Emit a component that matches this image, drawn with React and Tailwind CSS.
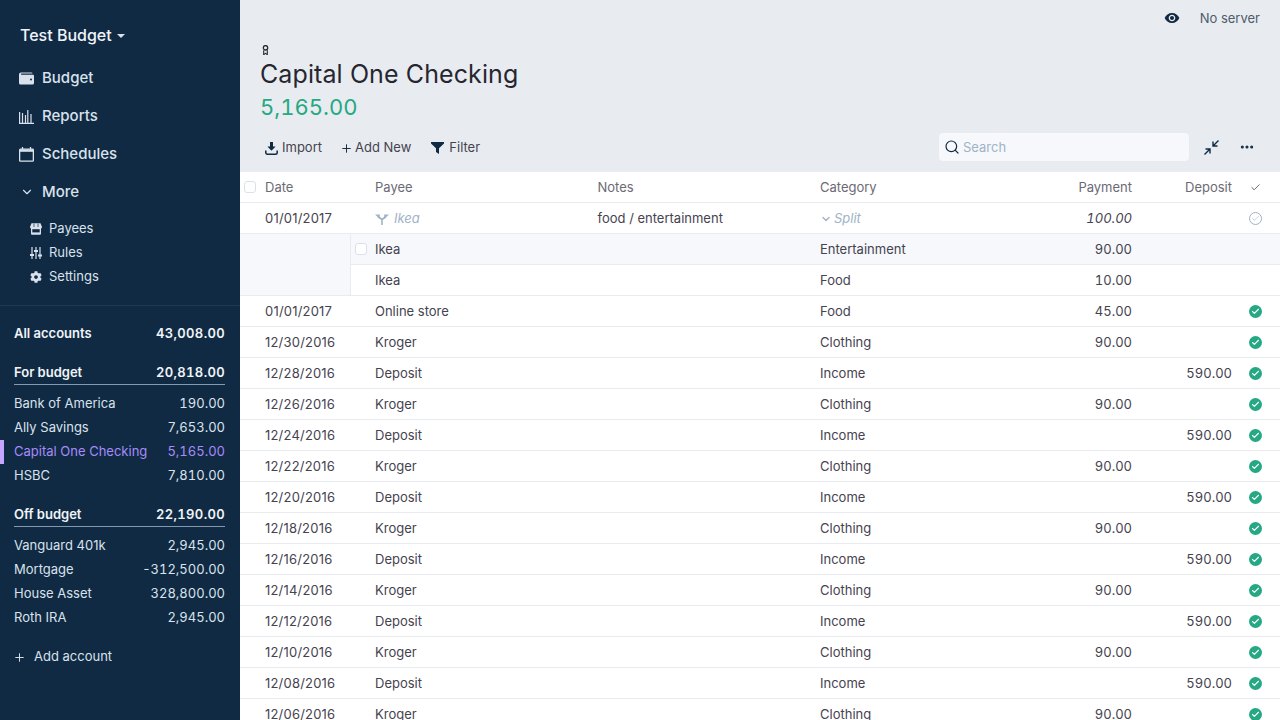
import { Plus, Search, Ellipsis, ChevronDown, Check } from "lucide-react";
import { MdVisibility } from "react-icons/md";
import { FaCog } from "react-icons/fa";

const accountGroups = [
  {
    name: "For budget",
    total: "20,818.00",
    accounts: [
      ["Bank of America", "190.00"],
      ["Ally Savings", "7,653.00"],
      ["Capital One Checking", "5,165.00", true],
      ["HSBC", "7,810.00"],
    ],
  },
  {
    name: "Off budget",
    total: "22,190.00",
    accounts: [
      ["Vanguard 401k", "2,945.00"],
      ["Mortgage", "-312,500.00"],
      ["House Asset", "328,800.00"],
      ["Roth IRA", "2,945.00"],
    ],
  },
];

const rows = [
  ["01/01/2017", "Online store", "Food", "45.00", ""],
  ["12/30/2016", "Kroger", "Clothing", "90.00", ""],
  ["12/28/2016", "Deposit", "Income", "", "590.00"],
  ["12/26/2016", "Kroger", "Clothing", "90.00", ""],
  ["12/24/2016", "Deposit", "Income", "", "590.00"],
  ["12/22/2016", "Kroger", "Clothing", "90.00", ""],
  ["12/20/2016", "Deposit", "Income", "", "590.00"],
  ["12/18/2016", "Kroger", "Clothing", "90.00", ""],
  ["12/16/2016", "Deposit", "Income", "", "590.00"],
  ["12/14/2016", "Kroger", "Clothing", "90.00", ""],
  ["12/12/2016", "Deposit", "Income", "", "590.00"],
  ["12/10/2016", "Kroger", "Clothing", "90.00", ""],
  ["12/08/2016", "Deposit", "Income", "", "590.00"],
  ["12/06/2016", "Kroger", "Clothing", "90.00", ""],
];

const WalletIcon = () => (
  <svg width="15" height="13" viewBox="0 0 15 13" fill="currentColor">
    <path d="M2 0.5h10.5a1 1 0 0 1 1 1H2.5a.6.6 0 0 0 0 1.2H14a1 1 0 0 1 1 1V11a1.5 1.5 0 0 1-1.5 1.5h-12A1.5 1.5 0 0 1 0 11V2.5a2 2 0 0 1 2-2z" />
    <circle cx="12" cy="7.6" r="1" fill="#102a43" />
  </svg>
);

const ReportsIcon = () => (
  <svg width="15" height="15" viewBox="0 0 15 15" fill="none" stroke="currentColor" strokeWidth="1.2">
    <path d="M0.6 3v11.4H15M3.5 4v10M6.5 6v8M8.8 1v13M12 5v9" />
  </svg>
);

const CalendarIcon = () => (
  <svg width="15" height="15" viewBox="0 0 15 15" fill="none" stroke="currentColor" strokeWidth="1.3">
    <rect x="0.65" y="2.2" width="13.7" height="12" rx="0.8" />
    <path d="M0.65 3.6h13.7" strokeWidth="2.4" />
    <path d="M3.5 0v2.5M11.5 0v2.5" />
  </svg>
);

const StoreIcon = () => (
  <svg width="12" height="12" viewBox="0 0 12 12" fill="currentColor">
    <path d="M1.5 0.2h9L12 4a1.4 1.4 0 0 1-1 1.4v5.4a1 1 0 0 1-1 1H2a1 1 0 0 1-1-1V5.4A1.4 1.4 0 0 1 0 4z" />
    <path d="M2.3 6.2v3.2h7.4V6.2z" fill="#102a43" />
    <path d="M4 0.6v3.4M8 0.6v3.4" stroke="#102a43" strokeWidth="0.7" />
  </svg>
);

const RulesIcon = () => (
  <svg width="12" height="12" viewBox="0 0 12 12" fill="none" stroke="currentColor" strokeWidth="1.2">
    <path d="M2 0v12M6 0v12M10 0v12" />
    <path d="M0 8h4M4 4h4M8 8.5h4" strokeWidth="1.8" />
  </svg>
);

const SplitIcon = () => (
  <svg width="14" height="11" viewBox="0 0 14 11" fill="none" stroke="#9fb3c8" strokeWidth="1.6">
    <path d="M7 11V5.5L3 2.5M7 5.5l4-3" />
    <path d="M0 0.4h4.8v4.6zM14 0.4H9.2v4.6z" fill="#9fb3c8" stroke="none" />
  </svg>
);

const CompressIcon = () => (
  <svg width="15" height="15" viewBox="0 0 15 15" fill="none" stroke="#102a43" strokeWidth="1.4">
    <path d="M14.5 0.5L9 6M9 1.5V6h4.5M0.5 14.5L6 9M1.5 9H6v4.5" />
  </svg>
);

const FunnelIcon = () => (
  <svg width="13" height="12" viewBox="0 0 13 12" fill="#102a43">
    <path d="M0 0h13v1.6L8 6.2V12L5 10V6.2L0 1.6z" />
  </svg>
);

const DownloadIcon = () => (
  <svg width="13" height="13" viewBox="0 0 13 13" fill="#102a43">
    <path d="M5 0h3v4.6h2.6L6.5 8.8 2.4 4.6H5z" />
    <path d="M0.8 8.5v2.2a1.5 1.5 0 0 0 1.5 1.5h8.4a1.5 1.5 0 0 0 1.5-1.5V8.5" fill="none" stroke="#102a43" strokeWidth="1.5" />
  </svg>
);

const AccountBadgeIcon = () => (
  <svg width="7" height="10" viewBox="0 0 7 10" fill="none" stroke="#272630">
    <circle cx="3.5" cy="2.8" r="2.2" strokeWidth="1.3" />
    <path d="M1.7 5.2v4.4l1.8-1.2 1.8 1.2V5.2" strokeWidth="1.1" />
  </svg>
);

const ClearedIcon = () => (
  <span className="flex h-[13px] w-[13px] items-center justify-center rounded-full bg-[#25a883]">
    <Check size={9} strokeWidth={3} className="text-white" />
  </span>
);

const NavItem = ({ icon, label }) => (
  <div className="flex h-[38px] items-center pl-[19px] text-[15px] font-medium text-[#d9e2ec]">
    <span className="flex w-[23px] shrink-0 items-center">{icon}</span>
    {label}
  </div>
);

const SubItem = ({ icon, label }) => (
  <div className="flex h-6 items-center pl-[30px] text-[13px] text-[#d9e2ec]">
    <span className="flex w-[19px] shrink-0 items-center">{icon}</span>
    {label}
  </div>
);

const Sidebar = () => (
  <aside className="flex h-full w-[240px] shrink-0 flex-col bg-[#102a43]">
    <div className="flex h-[59px] shrink-0 items-end pb-[14px] pl-5 text-base font-medium leading-5 text-[#f0f4f8]">
      Test Budget
      <span className="mb-[7px] ml-[5px] h-0 w-0 border-x-[4px] border-t-[4px] border-x-transparent border-t-[#d9e2ec]"></span>
    </div>
    <NavItem icon={<WalletIcon />} label="Budget" />
    <NavItem icon={<ReportsIcon />} label="Reports" />
    <NavItem icon={<CalendarIcon />} label="Schedules" />
    <NavItem icon={<ChevronDown size={14} strokeWidth={2} className="ml-px" />} label="More" />
    <div className="mt-[6px] flex flex-col">
      <SubItem icon={<StoreIcon />} label="Payees" />
      <SubItem icon={<RulesIcon />} label="Rules" />
      <SubItem icon={<FaCog size={12} />} label="Settings" />
    </div>
    <div className="mt-[16px] border-t border-[#1f3a56] pt-[16px] text-[13px]">
      <div className="flex h-6 items-center justify-between pl-[14px] pr-[15px] font-semibold text-[#f0f4f8]">
        <span>All accounts</span>
        <span className="tabular-nums tracking-[0.35px]">43,008.00</span>
      </div>
      {accountGroups.map((group) => (
        <div key={group.name} className="mt-[15px] mb-[15px]">
          <div className="mx-[15px] ml-[14px] flex h-6 items-center justify-between border-b border-[#829ab1] font-semibold text-[#f0f4f8]">
            <span>{group.name}</span>
            <span className="tabular-nums tracking-[0.35px]">{group.total}</span>
          </div>
          <div className="mt-[7px]">
            {group.accounts.map(([name, amount, active]) => (
              <div
                key={name}
                className={
                  active
                    ? "flex h-6 items-center justify-between border-l-4 border-[#c4a5ff] pl-[10px] pr-[15px] text-[#a78bfa]"
                    : "flex h-6 items-center justify-between pl-[14px] pr-[15px] text-[#d9e2ec]"
                }
              >
                <span>{name}</span>
                <span className="tabular-nums">{amount}</span>
              </div>
            ))}
          </div>
        </div>
      ))}
      <div className="flex h-6 items-center pl-[14px] text-[#d9e2ec]">
        <Plus size={13} strokeWidth={1.8} className="mr-[8px] -ml-[1px]" />
        Add account
      </div>
    </div>
  </aside>
);

const Row = ({ date, payee, category, payment, deposit, cleared }) => (
  <div className="flex h-[31px] shrink-0 items-center border-b border-[#e8ecf0] bg-white pt-[2px] text-[13px] text-[#45434f]">
    <span className="w-[135px] shrink-0 pl-[25px] tracking-[0.2px]">{date}</span>
    <span className="w-[222.5px] shrink-0">{payee}</span>
    <span className="w-[222.5px] shrink-0"></span>
    <span className="w-[212px] shrink-0">{category}</span>
    <span className="w-[100px] shrink-0 text-right tabular-nums">{payment}</span>
    <span className="w-[100px] shrink-0 text-right tabular-nums">{deposit}</span>
    <span className="-mt-[2px] flex w-[46px] shrink-0 justify-center">{cleared}</span>
  </div>
);

const Checkbox = () => <span className="block h-3 w-3 rounded-[3px] border border-[#d9e2ec] bg-white"></span>;

const App = () => (
  <div className="flex h-screen w-[1280px] overflow-hidden bg-[#e8ecf0] font-['Inter',sans-serif]">
    <Sidebar />
    <main className="flex min-w-0 flex-1 flex-col">
      <div className="flex h-9 shrink-0 items-center justify-end pr-5 pt-[2px] text-[13px] text-[#4d5b6b]">
        <MdVisibility size={16} className="-mt-[2px] mr-5 text-[#102a43]" />
        No server
      </div>
      <div className="pl-5">
        <div className="flex h-[19px] items-center pl-[2px] pt-[8px]">
          <AccountBadgeIcon />
        </div>
        <h1 className="mt-[4px] text-[25px] leading-[30px] tracking-[0.1px] text-[#272630]">Capital One Checking</h1>
        <div className="mt-[4px] text-[22px] leading-[28px] tabular-nums text-[#25a883]">5,165.00</div>
      </div>
      <div className="mt-[12px] flex h-[28px] shrink-0 items-center pl-[25px] pr-[25px] pt-[2px] text-[13px] text-[#45434f]">
        <span className="mr-[4px]"><DownloadIcon /></span>
        Import
        <Plus size={13} strokeWidth={1.8} className="ml-[18px] mr-[2px] text-[#102a43]" />
        Add New
        <span className="ml-[20px]"><FunnelIcon /></span>
        <span className="ml-[5px]">Filter</span>
        <div className="-mt-[2px] ml-auto flex h-[28px] w-[250px] items-center rounded-[4px] bg-[#f6f8fb] pl-[5px] text-[#9fb3c8]">
          <Search size={16} strokeWidth={1.8} className="mr-[3px] text-[#102a43]" />
          <span className="pt-[2px]">Search</span>
        </div>
        <span className="-mt-[2px] ml-[15px]"><CompressIcon /></span>
        <Ellipsis size={16} strokeWidth={2.6} className="-mt-[2px] ml-[20px] text-[#102a43]" />
      </div>
      <div className="mt-[11px] flex min-h-0 flex-1 flex-col overflow-hidden">
        <div className="flex h-[31px] shrink-0 items-center border-b border-[#e8ecf0] bg-white pt-[2px] text-[13px] text-[#6c6a75]">
          <span className="-mt-[2px] flex w-[25px] shrink-0 pl-[4px]"><Checkbox /></span>
          <span className="w-[110px] shrink-0">Date</span>
          <span className="w-[222.5px] shrink-0">Payee</span>
          <span className="w-[222.5px] shrink-0">Notes</span>
          <span className="w-[212px] shrink-0">Category</span>
          <span className="w-[100px] shrink-0 text-right">Payment</span>
          <span className="w-[100px] shrink-0 text-right">Deposit</span>
          <span className="-mt-[2px] flex w-[46px] shrink-0 justify-center">
            <Check size={11} strokeWidth={1.5} className="text-[#272630]" />
          </span>
        </div>
        <div className="flex h-[31px] shrink-0 items-center border-b border-[#e8ecf0] bg-white pt-[2px] text-[13px] text-[#45434f]">
          <span className="w-[135px] shrink-0 pl-[25px] tracking-[0.2px]">01/01/2017</span>
          <span className="flex w-[222.5px] shrink-0 items-center text-[#9fb3c8] italic">
            <SplitIcon />
            <span className="ml-[5px]">Ikea</span>
          </span>
          <span className="w-[222.5px] shrink-0">food / entertainment</span>
          <span className="flex w-[212px] shrink-0 items-center italic text-[#9fb3c8]">
            <ChevronDown size={12} strokeWidth={2.8} className="mr-[2px]" />
            Split
          </span>
          <span className="w-[100px] shrink-0 text-right italic tabular-nums">100.00</span>
          <span className="w-[100px] shrink-0"></span>
          <span className="-mt-[2px] flex w-[46px] shrink-0 justify-center">
            <span className="flex h-[13px] w-[13px] items-center justify-center rounded-full border border-[#9fb3c8]">
              <Check size={9} strokeWidth={1.6} className="text-[#9fb3c8]" />
            </span>
          </span>
        </div>
        <div className="flex shrink-0 border-b border-[#e8ecf0] bg-white text-[13px] text-[#45434f]">
          <div className="w-[111px] shrink-0 border-r border-[#e8ecf0] bg-[#f6f8fb]"></div>
          <div className="flex-1">
            <div className="flex h-[31px] items-center border-b border-[#e8ecf0] bg-[#f6f8fb] pt-[2px]">
              <span className="-mt-[2px] flex w-[24px] shrink-0 pl-[4px]"><Checkbox /></span>
              <span className="w-[445px] shrink-0">Ikea</span>
              <span className="w-[212px] shrink-0">Entertainment</span>
              <span className="w-[100px] shrink-0 text-right tabular-nums">90.00</span>
            </div>
            <div className="flex h-[30px] items-center pt-[2px]">
              <span className="w-[24px] shrink-0"></span>
              <span className="w-[445px] shrink-0">Ikea</span>
              <span className="w-[212px] shrink-0">Food</span>
              <span className="w-[100px] shrink-0 text-right tabular-nums">10.00</span>
            </div>
          </div>
        </div>
        {rows.map(([date, payee, category, payment, deposit]) => (
          <Row
            key={date}
            date={date}
            payee={payee}
            category={category}
            payment={payment}
            deposit={deposit}
            cleared={<ClearedIcon />}
          />
        ))}
      </div>
    </main>
  </div>
);

export default App;
